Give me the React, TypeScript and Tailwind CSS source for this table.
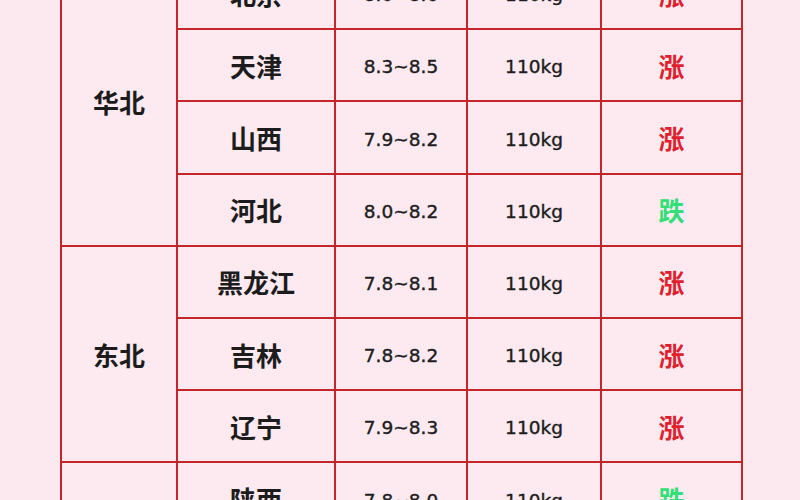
import React from "react";

type Row = { city: string; price: string; weight: string; up: boolean };
type Group = { region: string; rows: Row[] };

const groups: Group[] = [
  {
    region: "华北",
    rows: [
      { city: "北京", price: "8.0~8.6", weight: "110kg", up: true },
      { city: "天津", price: "8.3~8.5", weight: "110kg", up: true },
      { city: "山西", price: "7.9~8.2", weight: "110kg", up: true },
      { city: "河北", price: "8.0~8.2", weight: "110kg", up: false },
    ],
  },
  {
    region: "东北",
    rows: [
      { city: "黑龙江", price: "7.8~8.1", weight: "110kg", up: true },
      { city: "吉林", price: "7.8~8.2", weight: "110kg", up: true },
      { city: "辽宁", price: "7.9~8.3", weight: "110kg", up: true },
    ],
  },
  {
    region: "西北",
    rows: [
      { city: "陕西", price: "7.8~8.0", weight: "110kg", up: false },
      { city: "甘肃", price: "7.7~8.0", weight: "110kg", up: true },
      { city: "宁夏", price: "7.8~8.1", weight: "110kg", up: true },
    ],
  },
];

const cell = "border-2 border-[#c4262a] text-center align-middle";
const cjk = "font-['Noto_Sans_CJK_SC',sans-serif] font-bold text-[26px] text-[#1c1c1c]";
const num =
  "pt-1 font-['DejaVu_Sans',sans-serif] text-[18.5px] text-[#1c1c1c] [-webkit-text-stroke:0.4px_#1c1c1c]";

export default function App() {
  return (
    <main className="h-[500px] w-[800px] overflow-hidden bg-[#fce9f0]">
      <table className="ml-[60px] -mt-[44px] w-[681px] table-fixed border-collapse bg-[#fdeaf1]">
        <colgroup>
          <col className="w-[116px]" />
          <col className="w-[158px]" />
          <col className="w-[132px]" />
          <col className="w-[134px]" />
          <col className="w-[141px]" />
        </colgroup>
        <tbody>
          {groups.map((g) =>
            g.rows.map((r, i) => (
              <tr key={g.region + r.city} className="h-[72.2px]">
                {i === 0 ? (
                  <td rowSpan={g.rows.length} className={`${cell} ${cjk}`}>
                    {g.region}
                  </td>
                ) : null}
                <td className={`${cell} ${cjk}`}>{r.city}</td>
                <td className={`${cell} ${num}`}>{r.price}</td>
                <td className={`${cell} ${num}`}>{r.weight}</td>
                <td
                  className={`${cell} font-['Noto_Sans_CJK_SC',sans-serif] font-bold text-[26px] ${
                    r.up ? "text-[#e0212d]" : "text-[#34de78]"
                  }`}
                >
                  {r.up ? "涨" : "跌"}
                </td>
              </tr>
            ))
          )}
        </tbody>
      </table>
    </main>
  );
}
